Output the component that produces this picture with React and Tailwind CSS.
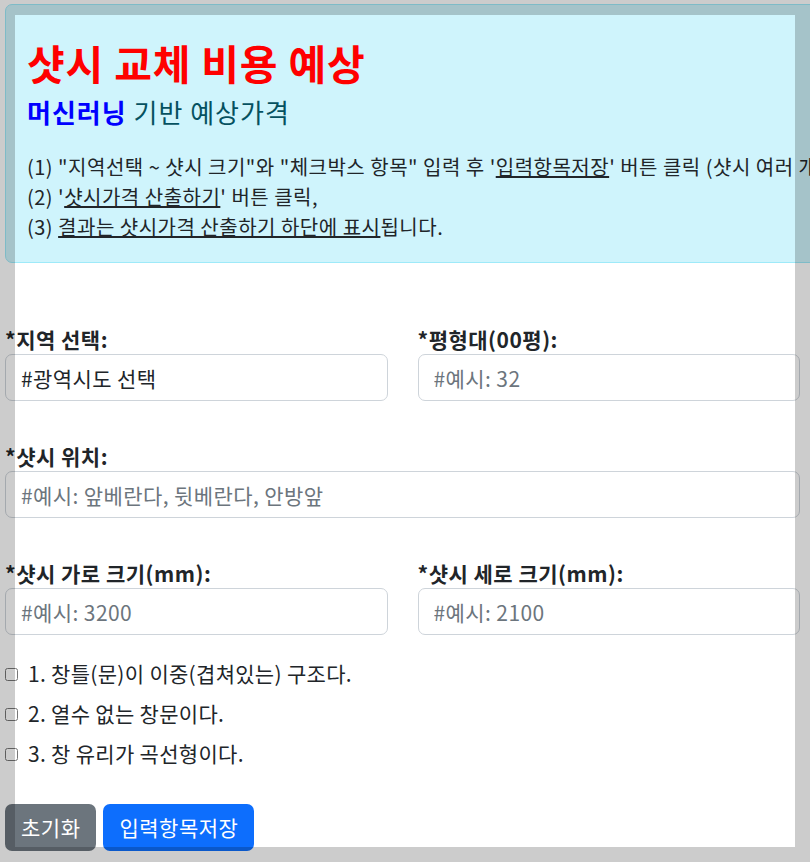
import React from 'react';

const Field = ({ label, placeholder, value }) => (
    <div className="flex flex-col">
        <label className="h-[30px] leading-[30px] text-[21px] tracking-[0.5px] font-bold text-[#212529]">{label}</label>
        <input
            type="text"
            placeholder={placeholder}
            defaultValue={value}
            className="h-[47px] w-full rounded-[7px] border border-[#ced4da] bg-white px-[15px] text-[21px] tracking-[0.4px] text-[#212529] placeholder:text-[#6c757d] outline-none"
        />
    </div>
);

const checks = [
    '1. 창틀(문)이 이중(겹쳐있는) 구조다.',
    '2. 열수 없는 창문이다.',
    '3. 창 유리가 곡선형이다.',
];

export default function App() {
    return (
        <div className="relative w-[810px] h-[862px] overflow-hidden bg-white font-['Noto_Sans_CJK_KR','Noto_Sans',sans-serif]">
            <div className="pl-[5px] pt-[4px] w-[800px]">
                {/* 안내 박스 */}
                <div className="w-[1100px] rounded-[7px] border border-[#9eeaf9] bg-[#cff4fc] pl-[21px] pt-[33px] pb-[20px] whitespace-nowrap">
                    <h1 className="text-[41px] tracking-[0.8px] leading-[48px] font-bold text-[#ff0000]">샷시 교체 비용 예상</h1>
                    <h4 className="mt-[10px] text-[26px] tracking-[1px] leading-[32px] text-[#055160]">
                        <span className="font-bold text-[#0000ff]">머신러닝</span> 기반 예상가격
                    </h4>
                    <div className="mt-[24px] text-[20px] tracking-[0.5px] leading-[30px] text-[#212529]">
                        <p>(1) "지역선택 ~ 샷시 크기"와 "체크박스 항목" 입력 후 '<u>입력항목저장</u>' 버튼 클릭 (샷시 여러 개일 경우 반복)</p>
                        <p>(2) '<u>샷시가격 산출하기</u>' 버튼 클릭,</p>
                        <p>(3) <u>결과는 샷시가격 산출하기 하단에 표시</u>됩니다.</p>
                    </div>
                </div>

                {/* 입력 폼 */}
                <div className="w-[795px] mt-[61px]">
                    <div className="grid grid-cols-2 gap-x-[30px]">
                        <Field label="*지역 선택:" value="#광역시도 선택" />
                        <Field label="*평형대(00평):" placeholder="#예시: 32" />
                    </div>
                    <div className="mt-[40px]">
                        <Field label="*샷시 위치:" placeholder="#예시: 앞베란다, 뒷베란다, 안방앞" />
                    </div>
                    <div className="mt-[40px] grid grid-cols-2 gap-x-[30px]">
                        <Field label="*샷시 가로 크기(mm):" placeholder="#예시: 3200" />
                        <Field label="*샷시 세로 크기(mm):" placeholder="#예시: 2100" />
                    </div>

                    <div className="mt-[24px] flex flex-col gap-[10px]">
                        {checks.map(text => (
                            <label key={text} className="flex items-center gap-[10px] h-[30px] text-[21px] tracking-[0.3px] text-[#212529]">
                                <input type="checkbox" className="m-0 w-[13px] h-[13px]" />
                                {text}
                            </label>
                        ))}
                    </div>

                    <div className="mt-[35px] flex gap-[7px]">
                        <button className="h-[47px] rounded-[7px] bg-[#6c757d] px-[16px] text-[21px] tracking-[0.5px] text-white">초기화</button>
                        <button className="h-[47px] rounded-[7px] bg-[#0d6efd] px-[16px] text-[21px] tracking-[0.5px] text-white">입력항목저장</button>
                    </div>
                </div>
            </div>

            {/* 바깥 테두리 오버레이 */}
            <div className="pointer-events-none absolute inset-0 border-[15px] border-black/20" />
        </div>
    );
}
